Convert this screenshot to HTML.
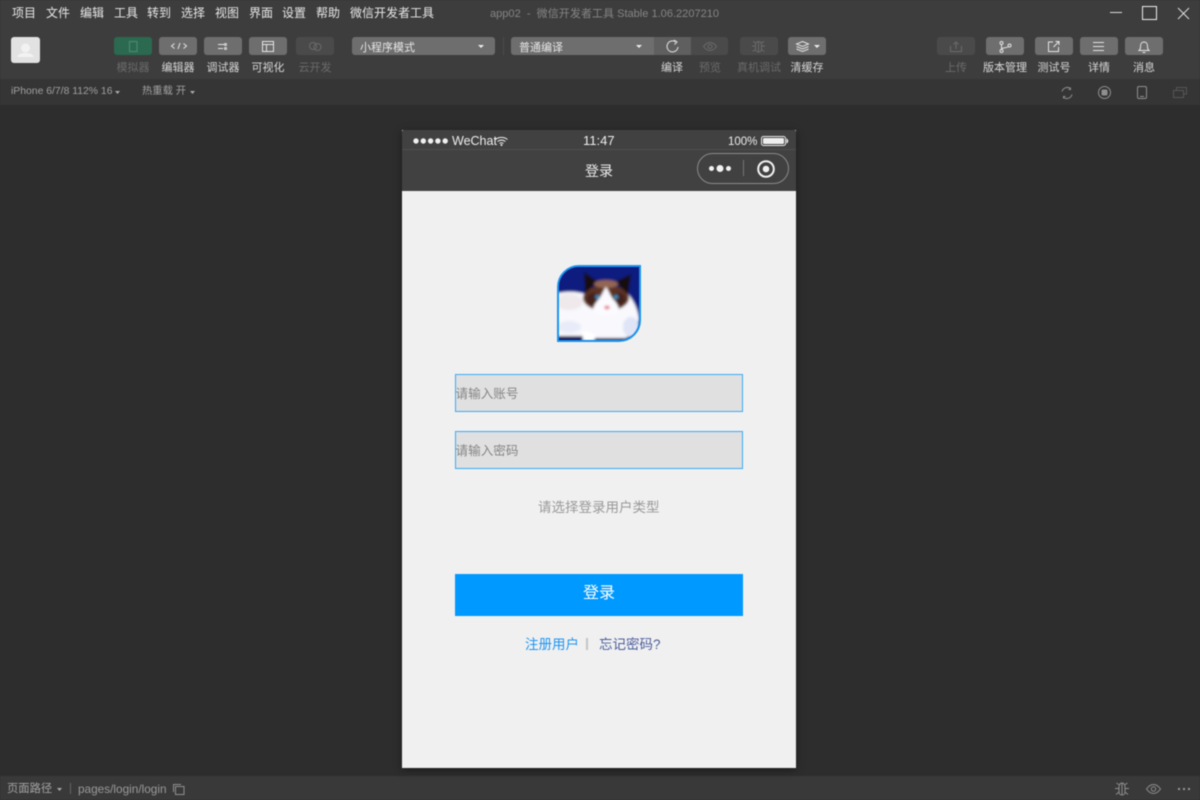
<!DOCTYPE html>
<html lang="zh"><head><meta charset="utf-8"><title>app02 - 微信开发者工具</title>
<style>
*{box-sizing:border-box;margin:0;padding:0}
html,body{width:1200px;height:800px;overflow:hidden;background:#2d2d2d}
body{position:relative;font-family:"Liberation Sans","Noto Sans CJK SC",sans-serif;color:#ddd}
#w{position:absolute;left:0;top:0;width:1200px;height:800px;filter:blur(.45px)}
.a,.t,.b,.l{position:absolute}
.t{white-space:nowrap;line-height:16px}
.m{font-size:12px;top:5px;color:#e8e8e8}
.l{font-size:11px;top:60px;line-height:16px;width:60px;text-align:center;color:#d8d8d8;white-space:nowrap}
.l.d{color:#6b6b6b}
.b{top:37px;width:38px;height:18px;border-radius:3px;background:#6e6e6e}
.b.d{background:#4a4a4a}
svg{position:absolute;display:block;overflow:visible}
.s{fill:none;stroke:#e4e4e4;stroke-width:1}
.ds{fill:none;stroke:#6a6a6a;stroke-width:1}
.g{fill:none;stroke:#8f8f8f;stroke-width:1}
</style></head><body><div id="w">
<div class="a" style="left:0;top:0;width:1200px;height:79px;background:#3d3d3d"></div>
<div class="a" style="left:0;top:79px;width:1200px;height:26px;background:#353535"></div>
<div class="a" style="left:0;top:776px;width:1200px;height:24px;background:#393939"></div>

<span class="t m" style="left:12px">项目</span><span class="t m" style="left:46px">文件</span><span class="t m" style="left:80px">编辑</span><span class="t m" style="left:114px">工具</span><span class="t m" style="left:147px">转到</span><span class="t m" style="left:181px">选择</span><span class="t m" style="left:215px">视图</span><span class="t m" style="left:249px">界面</span><span class="t m" style="left:282px">设置</span><span class="t m" style="left:316px">帮助</span><span class="t m" style="left:350px">微信开发者工具</span>
<span class="t" style="left:490px;top:6px;font-size:11.050px;color:#858585">app02 &nbsp;-&nbsp; 微信开发者工具 Stable 1.06.2207210</span>

<svg style="left:1110px;top:12px" width="12" height="2"><path d="M0 .5H12" stroke="#ddd"/></svg>
<div class="a" style="left:1142px;top:6px;width:15px;height:14px;border:1.5px solid #eee"></div>
<svg style="left:1178px;top:8px" width="11" height="11"><path d="M0 0L11 11M11 0L0 11" stroke="#ddd" fill="none"/></svg>

<div class="a" style="left:11px;top:37px;width:29px;height:26px;border-radius:3px;background:#e2e2e2;overflow:hidden"><svg style="left:0;top:0" width="29" height="26"><circle cx="14.500" cy="11" r="4.500" fill="#f2f2f2"/><path d="M6 20c1-3 5-4 8.500-4s7.500 1 8.500 4z" fill="#f2f2f2"/></svg></div>

<div class="b" style="left:114px;background:#2b6a50"></div>
<svg style="left:129px;top:41px" width="9" height="11"><rect x=".5" y=".5" width="7.500" height="10" class="ds" style="stroke:#4f8d73"/></svg>
<div class="b" style="left:159px"></div>
<svg style="left:170.500px;top:43px" width="16" height="6"><path d="M3.500 .5L.5 3L3.500 5.500M9 0L7 6M12.500 .5L15.500 3L12.500 5.500" class="s"/></svg>
<div class="b" style="left:204px"></div><svg style="left:218px;top:43px" width="10" height="7"><path d="M0 1.500H6M0 5.500H5" class="s"/><circle cx="7.500" cy="1.500" r="1" class="s"/><circle cx="7.500" cy="5.500" r="1" class="s"/></svg>
<div class="b" style="left:249px"></div><svg style="left:262px;top:41px" width="12" height="11"><path d="M.5.5H11.500V10.500H.5ZM.5 3.500H11.500M4.500 3.500V10.500" class="s"/></svg>
<div class="b d" style="left:296px"></div><svg style="left:308px;top:42px" width="14" height="9"><circle cx="5" cy="4" r="3.500" class="ds"/><circle cx="9.500" cy="5" r="3.500" class="ds"/></svg>
<span class="l d" style="left:103px">模拟器</span><span class="l" style="left:148px">编辑器</span><span class="l" style="left:193px">调试器</span><span class="l" style="left:238px">可视化</span><span class="l d" style="left:285px">云开发</span>

<div class="b" style="left:352px;width:143px"></div><span class="t" style="left:360px;top:40px;font-size:11px;color:#e8e8e8">小程序模式</span>
<svg style="left:478px;top:45px" width="6" height="3"><path d="M0 0H6L3 3Z" fill="#eee"/></svg>
<div class="a" style="left:503px;top:37px;width:1px;height:18px;background:#4a4a4a"></div>
<div class="b" style="left:511px;width:143px;border-radius:3px 0 0 3px"></div><span class="t" style="left:519px;top:40px;font-size:11px;color:#e8e8e8">普通编译</span>
<svg style="left:636px;top:45px" width="6" height="3"><path d="M0 0H6L3 3Z" fill="#eee"/></svg>
<div class="b" style="left:654px;width:37px;border-radius:0;background:#5f5f5f"></div>
<svg style="left:666px;top:40px" width="13" height="13"><path d="M9.500 1.800A5.500 5.500 0 1 0 12 7" class="s"/><path d="M8 0L11 2L8.500 4.500" class="s"/></svg>
<div class="b d" style="left:691px;width:37px;border-radius:0 3px 3px 0"></div>
<svg style="left:703px;top:42px" width="14" height="9"><path d="M.5 4.500C3 1 5 .5 7 .5S11 1 13.500 4.500C11 8 9 8.500 7 8.500S3 8 .5 4.500Z" class="ds"/><circle cx="7" cy="4.500" r="2" class="ds"/></svg>
<div class="b d" style="left:740px"></div>
<svg style="left:751px;top:40px" width="15" height="13"><path d="M4.500 5C4.500 2.500 6 1.500 7.500 1.500S10.500 2.500 10.500 5V9C10.500 11 9 12 7.500 12S4.500 11 4.500 9ZM7.500 1.500V12M4.500 6H1M10.500 6H14M4.500 9.500L1.500 11.500M10.500 9.500L13.500 11.500M5 3L2 1.500M10 3L13 1.500" class="ds"/></svg>
<div class="b" style="left:788px"></div>
<svg style="left:796px;top:41px" width="13" height="11"><path d="M6.500.5L12.500 3L6.500 5.500L.5 3ZM.5 5.500L6.500 8L12.500 5.500M.5 8L6.500 10.500L12.500 8" class="s"/></svg>
<svg style="left:814px;top:45px" width="6" height="3"><path d="M0 0H6L3 3Z" fill="#eee"/></svg>
<span class="l" style="left:642px">编译</span><span class="l d" style="left:680px">预览</span><span class="l d" style="left:729px">真机调试</span><span class="l" style="left:777px">清缓存</span>

<div class="b d" style="left:937px"></div>
<svg style="left:950px;top:41px" width="12" height="11"><path d="M.5 5V10.500H11.500V5M6 8V1M3.500 3.500L6 1L8.500 3.500" class="ds"/></svg>
<div class="b" style="left:986px"></div>
<svg style="left:999px;top:41px" width="13" height="12"><circle cx="2.500" cy="2" r="1.500" class="s"/><circle cx="2.500" cy="10" r="1.500" class="s"/><circle cx="10.500" cy="4.500" r="1.500" class="s"/><path d="M2.500 3.500V8.500M2.500 8C3 6.500 9 7 9.500 5.500" class="s"/></svg>
<div class="b" style="left:1035px"></div>
<svg style="left:1048px;top:41px" width="12" height="11"><path d="M5 1H.5V10.500H10.500V6M5.500 6L11 .5M7.500 .5H11V4" class="s"/></svg>
<div class="b" style="left:1080px"></div>
<svg style="left:1093px;top:42px" width="11" height="9"><path d="M0 .5H11M0 4.500H11M0 8.500H11" class="s"/></svg>
<div class="b" style="left:1125px"></div>
<svg style="left:1138px;top:41px" width="12" height="12"><path d="M1 9.500C2.500 8 2.500 7 2.500 5C2.500 2.500 4 1 6 1S9.500 2.500 9.500 5C9.500 7 9.500 8 11 9.500ZM4.500 11.500H7.500" class="s"/></svg>
<span class="l d" style="left:926px">上传</span><span class="l" style="left:975px">版本管理</span><span class="l" style="left:1024px">测试号</span><span class="l" style="left:1069px">详情</span><span class="l" style="left:1114px">消息</span>

<span class="t" style="left:11px;top:84px;font-size:10.400px;color:#a0a0a0">iPhone 6/7/8 112% 16</span>
<svg style="left:115px;top:91px" width="5" height="3"><path d="M0 0H5L2.500 3Z" fill="#aaa"/></svg>
<span class="t" style="left:142px;top:84px;font-size:10.300px;color:#a0a0a0">热重载 开</span>
<svg style="left:190px;top:91px" width="5" height="3"><path d="M0 0H5L2.500 3Z" fill="#aaa"/></svg>
<svg style="left:1061px;top:87px" width="12" height="12"><path d="M1 4.500A5.500 5.500 0 0 1 9.500 1.500M11 7.500A5.500 5.500 0 0 1 2.500 10.500M9.500.5V2.500H7.500M2.500 11.500V9.500H4.500" class="g"/></svg>
<svg style="left:1098px;top:86px" width="13" height="13"><circle cx="6.500" cy="6.500" r="6" class="g"/><rect x="3.500" y="3.500" width="6" height="6" rx="1.500" fill="#8f8f8f"/></svg>
<svg style="left:1137px;top:86px" width="10" height="13"><rect x=".5" y=".5" width="9" height="12" rx="1.500" class="g"/><path d="M3 10.500H7" class="g"/></svg>
<svg style="left:1173px;top:87px" width="14" height="11"><path d="M3.500 3V.5H13.500V7H11M.5 3.500H10.500V10.500H.5Z" fill="none" stroke="#555"/></svg>

<!-- phone -->
<div class="a" style="left:402px;top:130px;width:394px;height:638px;background:#f0f0f0;box-shadow:0 2px 8px rgba(0,0,0,.4)"></div>
<div class="a" style="left:402px;top:130px;width:394px;height:61px;background:#414141;border-radius:2px 2px 0 0"></div>
<div class="a" style="left:402px;top:149px;width:394px;height:1px;background:#4e4e4e"></div>
<svg style="left:413px;top:138px" width="36" height="6"><g fill="#f0f0f0"><circle cx="3" cy="3" r="2.700"/><circle cx="10.300" cy="3" r="2.700"/><circle cx="17.600" cy="3" r="2.700"/><circle cx="24.900" cy="3" r="2.700"/><circle cx="32.200" cy="3" r="2.700"/></g></svg>
<span class="t" style="left:452px;top:133px;font-size:12.500px;color:#eee">WeChat</span>
<svg style="left:495px;top:137px" width="13" height="9"><path d="M.5 2.500C4 -.3 9 -.3 12.500 2.500M2.500 4.500C5 2.700 8 2.700 10.500 4.500M4.500 6.500C5.800 5.500 7.200 5.500 8.500 6.500" fill="none" stroke="#eee"/><circle cx="6.500" cy="8" r="1" fill="#eee"/></svg>
<span class="t" style="left:583px;top:133px;font-size:13px;color:#eee">11:47</span>
<span class="t" style="left:728px;top:134px;font-size:11.500px;color:#eee">100%</span>
<svg style="left:761px;top:136px" width="28" height="10"><rect x=".5" y=".5" width="24" height="9" rx="2" fill="none" stroke="#eee"/><rect x="2" y="2" width="21" height="6" rx="1" fill="#eee"/><path d="M26 3.500Q27.500 5 26 6.500Z" fill="#eee" stroke="#eee"/></svg>
<span class="t" style="left:585px;top:163px;font-size:14px;color:#eee">登录</span>
<div class="a" style="left:697px;top:153px;width:92px;height:31px;border-radius:16px;border:1px solid #8a8a8a"></div>
<svg style="left:708px;top:164px" width="26" height="9"><g fill="#f2f2f2"><circle cx="3.500" cy="4.500" r="2.500"/><circle cx="12" cy="4.500" r="3.500"/><circle cx="20.500" cy="4.500" r="2.500"/></g></svg>
<div class="a" style="left:743px;top:160px;width:1px;height:16px;background:#777"></div>
<svg style="left:756px;top:159px" width="20" height="20"><circle cx="10" cy="10" r="7.800" fill="none" stroke="#f2f2f2" stroke-width="2"/><circle cx="10" cy="10" r="3.300" fill="#f2f2f2"/></svg>

<!-- avatar -->
<div class="a" style="left:557px;top:265px;width:84px;height:77px;border:2px solid #1a94ef;border-radius:22px 0 22px 0;overflow:hidden;background:#0a1a7e">
<svg style="left:0;top:0" width="80" height="73" viewBox="0 0 80 73">
<defs><filter id="f" x="-20%" y="-20%" width="140%" height="140%"><feGaussianBlur stdDeviation="1.400"/></filter></defs>
<g filter="url(#f)">
<rect x="-8" y="-8" width="96" height="89" fill="#0a1a7e"/>
<rect x="-8" y="66" width="96" height="15" fill="#10195a"/>
<path d="M-6 27C8 24 16 24 26 27L68 26C74 32 79 42 80 52C79 60 74 67 67 71L36 71L24 69L-6 69Z" fill="#f8f8fd"/>
<ellipse cx="10" cy="35" rx="14" ry="8" fill="#efe9ec"/>
<ellipse cx="72" cy="60" rx="8" ry="10" fill="#dfe4f7"/>
<ellipse cx="10" cy="60" rx="12" ry="6" fill="#e8ecf8"/>
<path d="M23 64C29 64 35 66 37 69L35 74H24Z" fill="#fff"/>
<ellipse cx="47" cy="31" rx="23" ry="13" fill="#5b3024"/>
<path d="M25 5L39 15L26 26ZM72 7L56 15L69 27Z" fill="#17100e"/>
<ellipse cx="47" cy="17" rx="12" ry="4" fill="#936652"/>
<ellipse cx="35" cy="32" rx="7" ry="6" fill="#42201a"/><ellipse cx="59" cy="32" rx="7" ry="6" fill="#42201a"/>
<path d="M47 20C49 22 51 28 54 32C58 36 60 40 60 44C58 50 36 50 34 44C34 40 36 36 40 32C43 28 45 22 47 20Z" fill="#fbfbff"/>
<circle cx="38.500" cy="30" r="2.200" fill="#3d8fbf"/><circle cx="57" cy="30" r="2.200" fill="#3d8fbf"/>
<ellipse cx="48" cy="40.500" rx="2.800" ry="2" fill="#ea7f94"/>
</g></svg></div>

<!-- form -->
<div class="a" style="left:455px;top:374px;width:288px;height:38px;background:#e0e0e0;border:1.500px solid #3aaaf6"></div>
<span class="t" style="left:455.500px;top:386px;font-size:12.600px;color:#858585">请输入账号</span>
<div class="a" style="left:455px;top:431px;width:288px;height:38px;background:#e0e0e0;border:1.500px solid #3aaaf6"></div>
<span class="t" style="left:455.500px;top:443px;font-size:12.600px;color:#858585">请输入密码</span>
<span class="t" style="left:538px;top:500px;font-size:13.500px;color:#999">请选择登录用户类型</span>
<div class="a" style="left:455px;top:574px;width:288px;height:42px;background:#0099ff"></div>
<span class="t" style="left:583px;top:586px;font-size:16px;color:#fff">登录</span>
<span class="t" style="left:525px;top:637px;font-size:13.500px;color:#1f96f2">注册用户</span>
<div class="a" style="left:586px;top:638px;width:2px;height:12px;background:#c4c4c4"></div>
<span class="t" style="left:599px;top:637px;font-size:13.500px;color:#4a5c9c">忘记密码?</span>

<!-- bottom -->
<span class="t" style="left:7px;top:781px;font-size:11.300px;color:#a5a5a5">页面路径</span>
<svg style="left:57px;top:788px" width="5" height="3"><path d="M0 0H5L2.500 3Z" fill="#aaa"/></svg>
<div class="a" style="left:70px;top:783px;width:1px;height:11px;background:#666"></div>
<span class="t" style="left:78px;top:781px;font-size:11.800px;color:#9a9a9a">pages/login/login</span>
<svg style="left:173px;top:784px" width="12" height="11"><path d="M.5 8V.5H8" class="g"/><rect x="2.500" y="2.500" width="8.500" height="8" class="g"/></svg>
<svg style="left:1114px;top:782px" width="16" height="14"><path d="M5 5C5 2.500 6.500 1 8 1S11 2.500 11 5V10C11 12 9.500 13 8 13S5 12 5 10ZM8 1V13M5 6.500H1M11 6.500H15M5 10L2 12.500M11 10L14 12.500M5.500 3L2.500 1M10.500 3L13.500 1" class="g"/></svg>
<svg style="left:1146px;top:784px" width="15" height="10"><path d="M.5 5C3 1.500 5.500.5 7.500.5S12 1.500 14.500 5C12 8.500 9.500 9.500 7.500 9.500S3 8.500 .5 5Z" class="g"/><circle cx="7.500" cy="5" r="2.200" class="g"/></svg>
<svg style="left:1178px;top:788px" width="12" height="2"><g fill="#9a9a9a"><rect x="0" y="0" width="2" height="2"/><rect x="5" y="0" width="2" height="2"/><rect x="10" y="0" width="2" height="2"/></g></svg>
</div></body></html>
